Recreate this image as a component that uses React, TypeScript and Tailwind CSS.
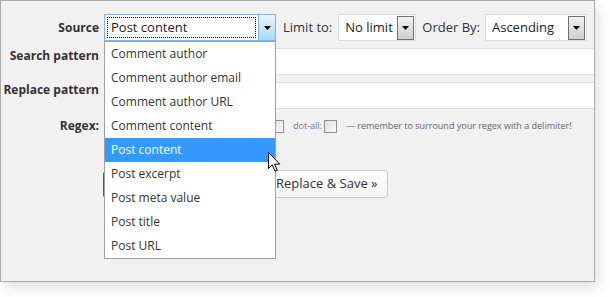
import React from 'react';

const sources = [
  'Comment author',
  'Comment author email',
  'Comment author URL',
  'Comment content',
  'Post content',
  'Post excerpt',
  'Post meta value',
  'Post title',
  'Post URL',
];

const Arrow = ({ blue }: { blue?: boolean }) => (
  <div
    className={
      blue
        ? 'flex h-full w-[17px] items-center justify-center border-l border-[#7eb4ea] bg-gradient-to-b from-[#eaf6fd] to-[#a7d9f5]'
        : 'flex h-full w-[17px] items-center justify-center border border-[#707070] bg-gradient-to-b from-[#f2f2f2] to-[#cfcfcf]'
    }
  >
    <svg width="7" height="4" viewBox="0 0 7 4">
      <path d="M0 0h7L3.5 4z" fill="#000" />
    </svg>
  </div>
);

const Checkbox = () => (
  <span className="inline-block h-[13px] w-[13px] shrink-0 border border-[#8f8f8f] bg-gradient-to-br from-[#dcdcdc] to-[#fafafa]" />
);

const Cursor = () => (
  <svg className="absolute left-[267px] top-[151px]" width="13" height="21" viewBox="0 0 13 21">
    <path
      d="M0.5 0.5v16l3.8-3.6 2.6 6.2 2.3-1-2.6-6h5.2z"
      fill="#fff"
      stroke="#000"
      strokeWidth="1"
      strokeLinejoin="miter"
    />
  </svg>
);

const App = () => {
  return (
    <div className="h-[297px] w-[610px] bg-white font-['Open_Sans',sans-serif]">
      <div className="relative h-[282px] w-[595px] border border-[#a9a9a9] bg-[#f1f1f1] pt-[13px] shadow-[4px_6px_12px_rgba(0,0,0,0.12)]">
        <div className="flex flex-col gap-[7px]">
          {/* Row 1 */}
          <div className="flex h-[27px] items-center whitespace-nowrap">
            <div className="w-[98px] text-right text-[12px] font-bold text-[#333]">Source</div>
            <div className="ml-[5px] flex h-[27px] w-[172px] border border-[#7eb4ea] bg-white">
              <div className="m-[2px] flex flex-1 items-center border border-dotted border-black pl-[3px] text-[13px] text-[#222]">
                Post content
              </div>
              <Arrow blue />
            </div>
            <div className="ml-[7px] text-[13px] text-[#333]">Limit to:</div>
            <div className="ml-[6px] flex h-[27px] w-[78px] items-center border border-[#ddd] bg-white pr-[1px]">
              <div className="flex-1 pl-[6px] text-[13px] text-[#222]">No limit</div>
              <div className="h-[24px]">
                <Arrow />
              </div>
            </div>
            <div className="ml-[6px] text-[13px] text-[#333]">Order By:</div>
            <div className="ml-[5px] flex h-[27px] w-[102px] items-center border border-[#ddd] bg-white pr-[1px]">
              <div className="flex-1 pl-[6px] text-[13px] text-[#222]">Ascending</div>
              <div className="h-[24px]">
                <Arrow />
              </div>
            </div>
          </div>

          {/* Row 2 */}
          <div className="flex h-[27px] items-start">
            <div className="w-[98px] whitespace-nowrap text-right text-[12px] font-bold leading-[16px] text-[#333]">Search pattern</div>
            <div className="ml-[5px] h-[27px] flex-1 border-y border-[#ddd] bg-white" />
          </div>

          {/* Row 3 */}
          <div className="flex h-[27px] items-start">
            <div className="w-[98px] whitespace-nowrap text-right text-[12px] font-bold leading-[16px] text-[#333]">Replace pattern</div>
            <div className="ml-[5px] h-[27px] flex-1 border-y border-[#ddd] bg-white" />
          </div>

          {/* Row 4 */}
          <div className="-mt-[1px] flex h-[22px] items-center whitespace-nowrap">
            <div className="w-[98px] text-right text-[12px] font-bold text-[#333]">Regex:</div>
            <div className="ml-[172px] flex items-center">
              <Checkbox />
              <span className="ml-[9px] text-[9px] text-[#6b7a99]">dot-all:</span>
              <span className="ml-[2px] flex">
                <Checkbox />
              </span>
              <span className="ml-[9px] text-[9px] text-[#666]">
                — remember to surround your regex with a delimiter!
              </span>
            </div>
          </div>

          {/* Row 5 */}
          <div className="mt-[26px] flex h-[28px] items-center whitespace-nowrap">
            <div className="ml-[102px] h-[27px] w-[150px] rounded-[3px] border border-[#1e6a96] bg-[#2e8fc7]" />
            <div className="ml-[8px] flex h-[28px] items-center rounded-[3px] border border-[#ccc] bg-gradient-to-b from-[#fefefe] to-[#f4f4f4] pl-[14px] pr-[9px] text-[13px] text-[#333]">
              Replace &amp; Save »
            </div>
          </div>
        </div>

        {/* Dropdown list */}
        <div className="absolute left-[103px] top-[40px] w-[172px] border border-[#a0a0a0] bg-white">
          {sources.map((s) => (
            <div
              key={s}
              className={
                s === 'Post content'
                  ? 'flex h-[24px] items-center bg-[#3399ff] pl-[6px] text-[12px] text-white'
                  : 'flex h-[24px] items-center pl-[6px] text-[12px] text-[#333]'
              }
            >
              {s}
            </div>
          ))}
        </div>

        <Cursor />
      </div>
    </div>
  );
};

export default App;
